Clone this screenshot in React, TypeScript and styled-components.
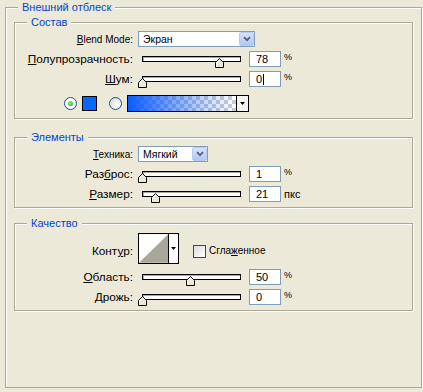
import React from 'react';
import styled, {createGlobalStyle} from 'styled-components';

const Global = createGlobalStyle`
  html, body { margin: 0; background: #ece9d8; }
  body { font-family: "Liberation Sans", Arial, sans-serif; font-size: 11px; color: #000; }
`;

const Outer = styled.div`
  position: relative; box-sizing: border-box;
  margin: 7px 1px 0 5px; height: 381px;
  padding: 14px 8px 0 8px;
  border: 1px solid #aca899;
  box-shadow: inset 1px 1px 0 #fff, 1px 1px 0 #fff;
`;
const Group = styled.div<{$gap: number; $pad: string}>`
  position: relative; margin-top: ${p => p.$gap}px; padding: ${p => p.$pad};
  border: 1px solid #aca899;
  box-shadow: inset 1px 1px 0 #fff, 1px 1px 0 #fff;
`;
const Legend = styled.span`
  position: absolute; top: -7px; left: 12px; padding: 0 4px;
  background: #ece9d8; color: #0046d5; line-height: 13px; font-size: 11px; white-space: nowrap;
`;
const Row = styled.div<{$h?: number; $mt?: number}>`
  display: flex; align-items: center; height: ${p => p.$h ?? 20}px; margin-top: ${p => p.$mt ?? 0}px;
`;
const Label = styled.div<{$big?: boolean; $top?: boolean}>`
  width: 118px; margin-right: 5px; text-align: right; white-space: nowrap;
  font-size: ${p => p.$big ? 11.8 : 10}px;
  ${p => p.$top && 'align-self: flex-start; margin-top: 12px;'}
`;
const Select = styled.div<{$w: number}>`
  box-sizing: border-box; width: ${p => p.$w}px; height: 16px; padding-left: 4px;
  display: flex; align-items: center; justify-content: space-between;
  border: 1px solid #7f9db9; background: #fff; font-size: 10.5px;
`;
const SelectBtn = styled.div`
  box-sizing: border-box; width: 15px; height: 14px; border: 1px solid #b9cbf3; border-radius: 2px;
  background: linear-gradient(#d6e1fc, #b3c6f4);
  display: flex; align-items: center; justify-content: center;
`;
const SliderBox = styled.div`
  position: relative; width: 107px; height: 11px; margin: 4px 4px 0 0;
`;
const Track = styled.div`
  position: absolute; left: 4px; top: 0; box-sizing: border-box; width: 99px; height: 6px;
  border: 1px solid #000; background: #fff; box-shadow: inset 1px 1px 0 #aca899;
`;
const ThumbSvg = styled.svg`
  position: absolute; top: 2px;
`;
const Field = styled.div`
  box-sizing: border-box; width: 32px; height: 16px; padding-left: 6px;
  display: flex; align-items: center; border: 1px solid #7f9db9; background: #fff;
`;
const Caret = styled.span`
  width: 1px; height: 11px; background: #000; margin-left: 1px;
`;
const Unit = styled.span<{$raised?: boolean}>`
  margin-left: 3px; font-size: ${p => p.$raised ? 9 : 11}px;
  ${p => p.$raised && 'align-self: flex-start; margin-top: 3px;'}
`;
const ColorRow = styled.div`
  display: flex; align-items: center; height: 20px; margin-top: 4px; padding-left: 49px;
`;
const Radio = styled.span<{$on?: boolean}>`
  box-sizing: border-box; width: 13px; height: 13px; border-radius: 50%; border: 1px solid #1c5180;
  background: ${p => p.$on ? '#fff' : 'radial-gradient(circle at 65% 65%, #fff, #d8d7cf 90%)'};
  display: flex; align-items: center; justify-content: center;
  &::after {
    content: ''; width: 5px; height: 5px; border-radius: 50%;
    background: radial-gradient(circle at 40% 40%, #8af08a, #21a121);
    display: ${p => p.$on ? 'block' : 'none'};
  }
`;
const Swatch = styled.span`
  box-sizing: border-box; width: 15px; height: 15px; margin: 0 12px 0 5px;
  border: 1px solid #000; background: #0569ff;
`;
const GradientPick = styled.div`
  box-sizing: border-box; display: flex; width: 122px; height: 17px; margin-left: 5px; border: 1px solid #000;
`;
const GradientFill = styled.div`
  flex: 1;
  background-image: linear-gradient(to right, #0a5cff, rgba(10, 92, 255, 0.25) 70%, rgba(10, 92, 255, 0)),
    conic-gradient(#cdcdcd 25%, #fff 0 50%, #cdcdcd 0 75%, #fff 0);
  background-size: 100% 100%, 8px 8px;
`;
const ArrowPart = styled.div<{$w: number; $bg: string}>`
  width: ${p => p.$w}px; border-left: 1px solid #000; background: ${p => p.$bg};
  display: flex; align-items: center; justify-content: center;
`;
const Contour = styled.div`
  box-sizing: border-box; display: flex; width: 41px; height: 31px; align-self: flex-start; margin-top: 1px;
  border: 1px solid #000;
`;
const Check = styled.span`
  box-sizing: border-box; width: 13px; height: 13px; margin: 13px 3px 0 14px; align-self: flex-start;
  border: 1px solid #1c5180; background: linear-gradient(135deg, #dcdcd7, #fff);
`;
const CheckLabel = styled.span`
  align-self: flex-start; margin-top: 13px; font-size: 10px;
`;

const Chevron = () => (
  <svg width="8" height="6" viewBox="0 0 8 6">
    <path d="M1 1.2 L4 4.2 L7 1.2" fill="none" stroke="#4d6185" strokeWidth="1.8"/>
  </svg>
);
const DownTri = () => (
  <svg width="5" height="3" viewBox="0 0 5 3"><path d="M0 0 H5 L2.5 3 Z" fill="#000"/></svg>
);

const Slider = ({v}: {v: number}) => (
  <SliderBox>
    <Track/>
    <ThumbSvg width="9" height="10" viewBox="0 0 9 10" style={{left: Math.round(v * 98.7)}}>
      <polygon points="0.5,9.5 0.5,4.5 4.5,0.5 8.5,4.5 8.5,9.5" fill="#ece9d8" stroke="#000"/>
      <polyline points="1.5,8.5 1.5,4.9 4.5,1.9" fill="none" stroke="#fff"/>
    </ThumbSvg>
  </SliderBox>
);

type SliderRowProps = {label: React.ReactNode; v: number; value: string; unit: string; caret?: boolean; mt?: number};
const SliderRow = ({label, v, value, unit, caret, mt}: SliderRowProps) => (
  <Row $mt={mt}>
    <Label $big>{label}</Label>
    <Slider v={v}/>
    <Field>{value}{caret && <Caret/>}</Field>
    <Unit $raised={unit === '%'}>{unit}</Unit>
  </Row>
);

export default function App() {
  return (
    <>
      <Global/>
      <Outer>
        <Legend>Внешний отблеск</Legend>
        <Group $gap={0} $pad="6px 0 5px">
          <Legend>Состав</Legend>
          <Row>
            <Label><u>B</u>lend Mode:</Label>
            <Select $w={117}>Экран<SelectBtn><Chevron/></SelectBtn></Select>
          </Row>
          <SliderRow label={<><u>П</u>олупрозрачность:</>} v={0.78} value="78" unit="%"/>
          <SliderRow label={<><u>Ш</u>ум:</>} v={0} value="0" unit="%" caret/>
          <ColorRow>
            <Radio $on/>
            <Swatch/>
            <Radio/>
            <GradientPick>
              <GradientFill/>
              <ArrowPart $w={11} $bg="#f4f3ee"><DownTri/></ArrowPart>
            </GradientPick>
          </ColorRow>
        </Group>
        <Group $gap={18} $pad="6px 0 3px">
          <Legend>Элементы</Legend>
          <Row>
            <Label><u>Т</u>ехника:</Label>
            <Select $w={70}>Мягкий<SelectBtn><Chevron/></SelectBtn></Select>
          </Row>
          <SliderRow label={<>Раз<u>б</u>рос:</>} v={0} value="1" unit="%"/>
          <SliderRow label={<><u>Р</u>азмер:</>} v={0.127} value="21" unit="пкс"/>
        </Group>
        <Group $gap={15} $pad="8px 0 3px">
          <Legend>Качество</Legend>
          <Row $h={32}>
            <Label $big $top>Конт<u>у</u>р:</Label>
            <Contour>
              <svg width="30" height="29" viewBox="0 0 30 29">
                <rect width="30" height="29" fill="#fff"/>
                <polygon points="0,29 30,0 30,29" fill="#a9a797"/>
              </svg>
              <ArrowPart $w={9} $bg="#fff"><DownTri/></ArrowPart>
            </Contour>
            <Check/>
            <CheckLabel>Сгла<u>ж</u>енное</CheckLabel>
          </Row>
          <SliderRow label={<><u>О</u>бласть:</>} v={0.49} value="50" unit="%" mt={3}/>
          <SliderRow label={<><u>Д</u>рожь:</>} v={0} value="0" unit="%"/>
        </Group>
      </Outer>
    </>
  );
}
